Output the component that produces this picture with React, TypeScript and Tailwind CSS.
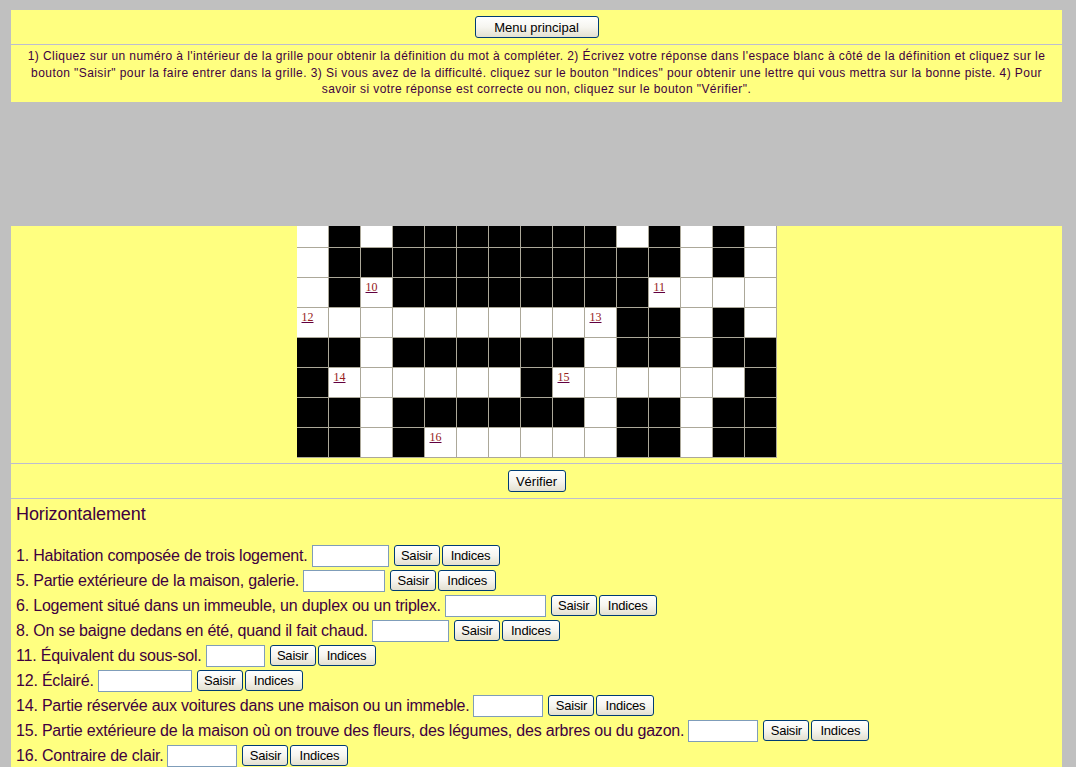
import React from "react";

const GRID: string[][] = [
  "W B W B B B B B B B W B W B W".split(" "),
  "W B B B B B B B B B B B W B W".split(" "),
  "W B 10 B B B B B B B B 11 W W W".split(" "),
  "12 W W W W W W W W 13 B B W B W".split(" "),
  "B B W B B B B B B W B B W B B".split(" "),
  "B 14 W W W W W B 15 W W W W W B".split(" "),
  "B B W B B B B B B W B B W B B".split(" "),
  "B B W B 16 W W W W W B B W B B".split(" "),
];

const CLUES: { text: string; w: number }[] = [
  { text: "1. Habitation composée de trois logement.", w: 77 },
  { text: "5. Partie extérieure de la maison, galerie.", w: 82 },
  { text: "6. Logement situé dans un immeuble, un duplex ou un triplex.", w: 101 },
  { text: "8. On se baigne dedans en été, quand il fait chaud.", w: 77 },
  { text: "11. Équivalent du sous-sol.", w: 59 },
  { text: "12. Éclairé.", w: 94 },
  { text: "14. Partie réservée aux voitures dans une maison ou un immeble.", w: 70 },
  { text: "15. Partie extérieure de la maison où on trouve des fleurs, des légumes, des arbres ou du gazon.", w: 70 },
  { text: "16. Contraire de clair.", w: 70 },
];

const btn =
  "border border-[#003c74] rounded-[3px] bg-gradient-to-b from-white via-[#f6f5f0] to-[#e3e0d0] text-black text-[13px] leading-none flex items-center justify-center";

export default function App() {
  return (
    <div
      className="w-[1076px] h-[767px] overflow-hidden bg-[#c0c0c0] pt-[10px] px-[11px] text-[#400040]"
      style={{ fontFamily: '"Liberation Sans", Arial, sans-serif' }}
    >
      <div className="w-[1051px] bg-[#ffff80]">
        <div className="flex justify-center pt-[6px] pb-[6px] border-b border-[#bdbdd0]">
          <button className={`${btn} w-[124px] h-[22px]`}>Menu principal</button>
        </div>
        <div className="px-[12px] pt-[3px] pb-[4.5px] text-center text-[12px] leading-[16.5px] tracking-[0.42px]">
          1) Cliquez sur un numéro à l'intérieur de la grille pour obtenir la définition du mot à compléter. 2) Écrivez votre réponse dans l'espace blanc à côté de la définition et cliquez sur le bouton "Saisir" pour la faire entrer dans la grille. 3) Si vous avez de la difficulté. cliquez sur le bouton "Indices" pour obtenir une lettre qui vous mettra sur la bonne piste. 4) Pour savoir si votre réponse est correcte ou non, cliquez sur le bouton "Vérifier".
        </div>
      </div>

      <div className="h-[124px]" />

      <div className="w-[1051px] bg-[#ffff80]">
        <div className="pb-[5px] border-b border-[#bdbdd0]">
          <div className="mx-auto w-fit grid grid-cols-[repeat(15,31px)] grid-rows-[21px_repeat(7,29px)] gap-px bg-[#aca899] border-r border-b border-[#aca899]">
            {GRID.flatMap((row, r) =>
              row.map((c, i) => (
                <div
                  key={`${r}-${i}`}
                  className={
                    c === "B"
                      ? "bg-black"
                      : "bg-white pl-[5px] pt-[2px] text-[12px] leading-[14px]"
                  }
                >
                  {c !== "B" && c !== "W" && (
                    <a
                      href="#"
                      className="underline text-[#962020] decoration-[#600040]"
                      style={{ fontFamily: '"Liberation Serif", "Times New Roman", serif' }}
                    >
                      {c}
                    </a>
                  )}
                </div>
              ))
            )}
          </div>
        </div>

        <div className="flex justify-center pt-[6px] pb-[6px] border-b border-[#bdbdd0]">
          <button className={`${btn} w-[58px] h-[22px]`}>Vérifier</button>
        </div>

        <div className="pl-[5px] pt-[5px]">
          <div className="text-[18px] leading-[21px] mb-[18px] tracking-[-0.1px]">Horizontalement</div>
          {CLUES.map((c) => (
            <div key={c.text} className="h-[25px] flex items-center text-[16px] tracking-[-0.2px]">
              <span>{c.text}</span>
              <input
                className="ml-[4px] h-[22px] border border-[#7f9db9] bg-white outline-none"
                style={{ width: c.w }}
                type="text"
              />
              <button className={`${btn} ml-[5px] w-[46px] h-[21px]`}>Saisir</button>
              <button className={`${btn} ml-[2px] w-[58px] h-[21px]`}>Indices</button>
            </div>
          ))}
        </div>
      </div>
    </div>
  );
}
